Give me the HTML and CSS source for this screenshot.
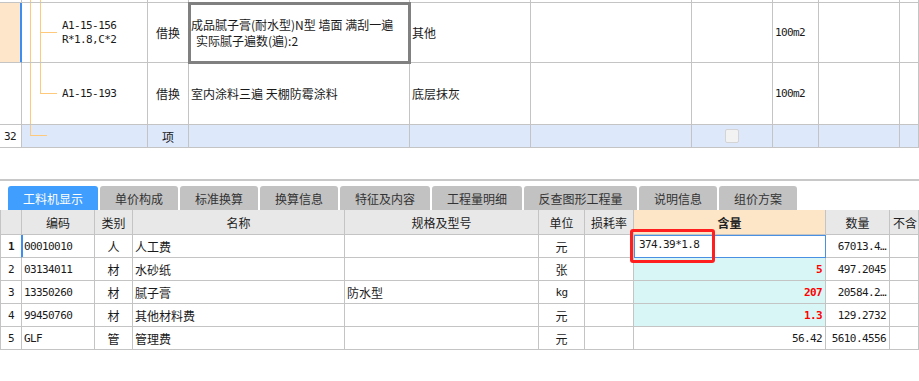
FILE: index.html
```html
<!DOCTYPE html>
<html lang="zh-CN">
<head>
    <meta charset="UTF-8">
    <title>工料机显示</title>
    <link rel="stylesheet" href="styles.css">
</head>
<body>
    <section class="quota-grid">
        <div class="q-row q-stub">
            <div class="rn"></div>
            <div class="tree tree-top"></div>
            <div></div><div></div><div></div><div></div><div></div><div></div><div></div><div></div>
        </div>
        <div class="q-row q-tall1">
            <div class="rn rn-current"></div>
            <div class="tree tree-mid"><span class="mono code-lines">A1-15-156<br>R*1.8,C*2</span></div>
            <div class="center">借换</div>
            <div class="selected">
                <div class="wrap">
                    <span class="line">成品腻子膏(耐水型)N型 墙面 满刮一遍</span>
                    <span class="line indent">实际腻子遍数(遍):2</span>
                </div>
            </div>
            <div>其他</div>
            <div></div>
            <div></div>
            <div class="mono">100m2</div>
            <div></div>
            <div></div>
        </div>
        <div class="q-row q-tall2">
            <div class="rn"></div>
            <div class="tree tree-last"><span class="mono code-lines">A1-15-193</span></div>
            <div class="center">借换</div>
            <div>室内涂料三遍 天棚防霉涂料</div>
            <div>底层抹灰</div>
            <div></div>
            <div></div>
            <div class="mono">100m2</div>
            <div></div>
            <div></div>
        </div>
        <div class="q-row q-new">
            <div class="rn mono">32</div>
            <div class="tree tree-end"></div>
            <div class="center">项</div>
            <div></div>
            <div></div>
            <div></div>
            <div class="center"><span class="check"></span></div>
            <div></div>
            <div></div>
            <div></div>
        </div>
    </section>

    <div class="splitter"></div>

    <nav class="tabs">
        <a href="#" class="tab active" style="width: 90px">工料机显示</a>
        <a href="#" class="tab" style="width: 78px">单价构成</a>
        <a href="#" class="tab" style="width: 78px">标准换算</a>
        <a href="#" class="tab" style="width: 78px">换算信息</a>
        <a href="#" class="tab" style="width: 90px">特征及内容</a>
        <a href="#" class="tab" style="width: 90px">工程量明细</a>
        <a href="#" class="tab" style="width: 113px">反查图形工程量</a>
        <a href="#" class="tab" style="width: 78px">说明信息</a>
        <a href="#" class="tab" style="width: 78px">组价方案</a>
    </nav>

    <section class="lmt-grid">
        <div class="l-row l-head">
            <div></div>
            <div>编码</div>
            <div>类别</div>
            <div>名称</div>
            <div>规格及型号</div>
            <div>单位</div>
            <div>损耗率</div>
            <div class="qty-head">含量</div>
            <div>数量</div>
            <div class="cut">不含</div>
        </div>
        <div class="l-row">
            <div class="rn rn-current mono">1</div>
            <div class="mono code-current">00010010</div>
            <div class="center">人</div>
            <div>人工费</div>
            <div></div>
            <div class="center">元</div>
            <div></div>
            <div class="mono editing">374.39*1.8</div>
            <div class="mono num">67013.4…</div>
            <div></div>
        </div>
        <div class="l-row">
            <div class="rn mono">2</div>
            <div class="mono">03134011</div>
            <div class="center">材</div>
            <div>水砂纸</div>
            <div></div>
            <div class="center">张</div>
            <div></div>
            <div class="mono num changed">5</div>
            <div class="mono num">497.2045</div>
            <div></div>
        </div>
        <div class="l-row">
            <div class="rn mono">3</div>
            <div class="mono">13350260</div>
            <div class="center">材</div>
            <div>腻子膏</div>
            <div>防水型</div>
            <div class="center mono">kg</div>
            <div></div>
            <div class="mono num changed">207</div>
            <div class="mono num">20584.2…</div>
            <div></div>
        </div>
        <div class="l-row">
            <div class="rn mono">4</div>
            <div class="mono">99450760</div>
            <div class="center">材</div>
            <div>其他材料费</div>
            <div></div>
            <div class="center">元</div>
            <div></div>
            <div class="mono num changed">1.3</div>
            <div class="mono num">129.2732</div>
            <div></div>
        </div>
        <div class="l-row">
            <div class="rn mono">5</div>
            <div class="mono">GLF</div>
            <div class="center">管</div>
            <div>管理费</div>
            <div></div>
            <div class="center">元</div>
            <div></div>
            <div class="mono num">56.42</div>
            <div class="mono num">5610.4556</div>
            <div></div>
        </div>
        <div class="mark"></div>
    </section>
</body>
</html>
```

FILE: styles.css
```css
body {
    margin: 0;
    width: 919px;
    font-family: "Noto Sans CJK SC", "Noto Sans", sans-serif;
    font-size: 12px;
    color: #1a1a1a;
    background: #fff;
    overflow: hidden;
}
.mono {
    font-family: "DejaVu Sans Mono", "Noto Sans CJK SC", monospace;
    font-size: 11px;
    letter-spacing: -0.6px;
}

/* upper grid: quota items */
.q-row {
    display: grid;
    grid-template-columns: 22px 126px 41px 221px 121px 161px 81px 46px 81px 1fr;
}
.q-row > div {
    box-sizing: border-box;
    border-right: 1px solid #c4c4c4;
    border-bottom: 1px solid #c4c4c4;
    display: flex;
    align-items: center;
    padding-left: 2px;
    white-space: nowrap;
    overflow: hidden;
}
.q-stub { height: 3px; }
.q-tall1 { height: 60px; }
.q-tall2 { height: 62px; }
.q-new { height: 23px; }
.q-new > div { background: #dde8fb; }
.q-new > .rn { background: #fff; padding-left: 4px; }
.q-row > .rn-current {
    background: #fde6c9;
    border-right-color: #3d8ef0;
    box-shadow: inset -1px 0 0 #3d8ef0;
}
.center {
    justify-content: center;
    padding-left: 0 !important;
}
.selected {
    outline: 3px solid #808080;
    outline-offset: -2px;
    position: relative;
    z-index: 1;
}
.wrap {
    display: flex;
    flex-direction: column;
    gap: 0;
}
.line {
    display: block;
    height: 16px;
    line-height: 16px;
}
.indent { padding-left: 5px; }
.code-lines {
    padding-left: 38px;
    line-height: 14px;
}

/* tree guides */
.tree { --guide: #ffc97c; }
.tree-top {
    background:
        linear-gradient(var(--guide), var(--guide)) no-repeat 8px 0 / 1px 100%,
        linear-gradient(var(--guide), var(--guide)) no-repeat 18px 0 / 1px 100%;
}
.tree-mid {
    background:
        linear-gradient(var(--guide), var(--guide)) no-repeat 8px 0 / 1px 100%,
        linear-gradient(var(--guide), var(--guide)) no-repeat 18px 0 / 1px 100%,
        linear-gradient(var(--guide), var(--guide)) no-repeat 18px 29px / 17px 1px;
}
.tree-last {
    background:
        linear-gradient(var(--guide), var(--guide)) no-repeat 8px 0 / 1px 100%,
        linear-gradient(var(--guide), var(--guide)) no-repeat 18px 0 / 1px 31px,
        linear-gradient(var(--guide), var(--guide)) no-repeat 18px 30px / 17px 1px;
}
.q-new > .tree-end {
    background:
        linear-gradient(var(--guide), var(--guide)) no-repeat 8px 0 / 1px 11px,
        linear-gradient(var(--guide), var(--guide)) no-repeat 8px 10px / 17px 1px,
        #dde8fb;
}
.check {
    width: 12px;
    height: 12px;
    border: 1px solid #d4d4d4;
    border-radius: 2px;
    background: #f2f2f2;
}

.splitter {
    margin-top: 31px;
    height: 2px;
    background: #c8c8c8;
}

/* tabs */
.tabs {
    display: flex;
    gap: 2px;
    padding: 5px 0 0 8px;
    height: 24px;
}
.tab {
    display: flex;
    align-items: center;
    justify-content: center;
    height: 24px;
    background: #c2c2c2;
    color: #333;
    text-decoration: none;
    border-radius: 3px 3px 0 0;
    font-size: 12px;
}
.tab.active {
    background: #409eff;
    color: #fff;
}

/* lower grid: labour / material / machine */
.lmt-grid { position: relative; }
.l-row {
    display: grid;
    grid-template-columns: 22px 73px 38px 212px 194px 46px 49px 192px 64px 1fr;
    height: 23px;
}
.l-row > div {
    box-sizing: border-box;
    border-right: 1px solid #c4c4c4;
    border-bottom: 1px solid #c4c4c4;
    display: flex;
    align-items: center;
    padding-left: 2px;
    white-space: nowrap;
    overflow: hidden;
}
.l-row > div:first-child { border-left: 1px solid #c4c4c4; }
.l-head { height: 25px; }
.l-head > div {
    background: #e8e8e8;
    justify-content: center;
    padding-left: 0;
    color: #222;
}
.l-head > .qty-head {
    background: #fde6c8;
    font-weight: bold;
}
.l-head > .cut { justify-content: flex-start; padding-left: 3px; }
.l-row > .rn {
    justify-content: center;
    padding-left: 0;
}
.l-row > .rn-current {
    font-weight: bold;
    border-right-color: #3d8ef0;
}
.code-current { box-shadow: inset 1px 0 0 #3d8ef0; }
.num {
    justify-content: flex-end;
    padding-right: 3px;
}
.changed {
    background: #d8f6f6;
    color: #ff0000;
    font-weight: bold;
}
.editing {
    outline: 1px solid #4a90e2;
    outline-offset: -1px;
    padding-left: 5px !important;
    align-items: flex-start !important;
    padding-top: 3px;
}
.mark {
    position: absolute;
    left: 630px;
    top: 19px;
    width: 85px;
    height: 34px;
    box-sizing: border-box;
    border: 3px solid #ff1f1f;
    border-radius: 3px;
}
```
